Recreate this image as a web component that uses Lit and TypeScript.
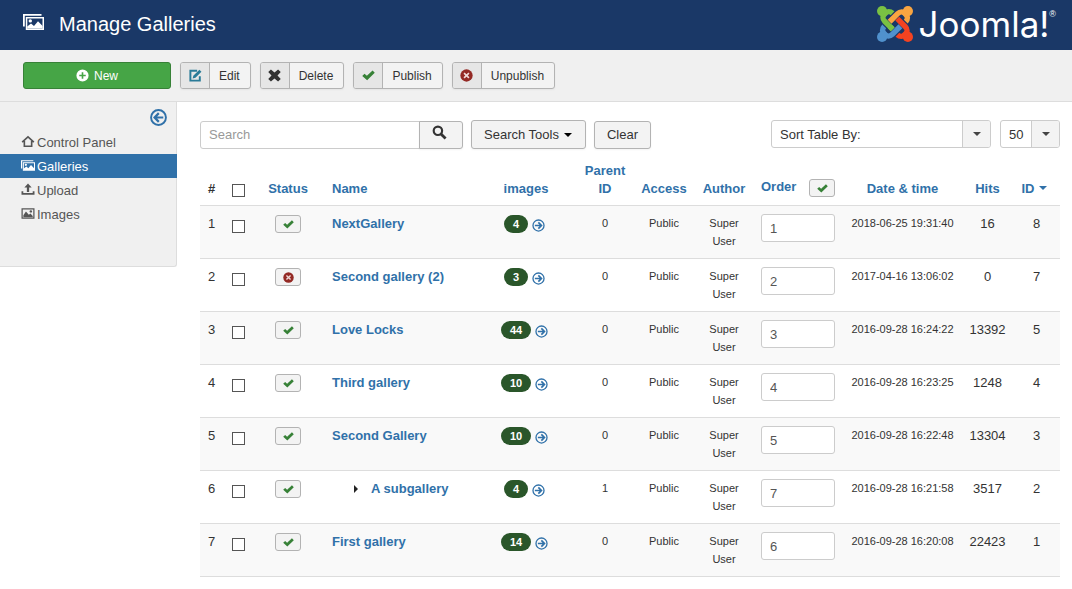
import { LitElement, html, css, svg, nothing } from "lit";
import { customElement, property } from "lit/decorators.js";

const icons: Record<string, unknown> = {
  gallery: svg`<path fill-rule="evenodd" d="M0 0H18.500V1.800H1.800V12.500H0ZM2.800 3H21V16H2.800ZM4.300 4.500V14.500H19.500V4.500Z"/><path d="M4.200 14.600V12.500L8 9.500L11 12L15 7.200L19.600 12V14.600Z"/><circle cx="7.300" cy="6.900" r="1.700"/>`,
  plus: svg`<path fill-rule="evenodd" d="M8 .5a7.500 7.500 0 1 0 0 15A7.500 7.500 0 0 0 8 .5ZM7 4h2v3h3v2H9v3H7V9H4V7h3Z"/>`,
  edit: svg`<path d="M10 2.200H1.700V14.300H13.300V9" fill="none" stroke="currentColor" stroke-width="2.400"/><path d="M4.500 11.800L5.300 8.300L12.800 .8L15.300 3.300L7.900 10.800Z"/>`,
  cross: svg`<path d="M.3 3.600L3.600 .5L8 4.300L12.400 .5L15.700 3.600L11.700 8L15.700 12.400L12.400 15.500L8 11.700L3.600 15.500L.3 12.400L4.300 8Z"/>`,
  check: svg`<path d="M0.300 8.500L3.100 5.800L6 8.300L13 1.900L15.700 4.600L6.300 13.800Z"/>`,
  remove: svg`<circle cx="8" cy="8" r="7.600"/><path d="M5 5L11 11M11 5L5 11" stroke="#f0d9d8" stroke-width="2"/>`,
  left: svg`<g fill="none" stroke="currentColor" stroke-width="1.800"><circle cx="8" cy="8" r="7"/><path d="M12.500 8H4.500M8.300 3.900L4.300 8L8.300 12.100" stroke-width="2.100"/></g>`,
  right: svg`<g fill="none" stroke="currentColor" stroke-width="1.600"><circle cx="8" cy="8" r="6.800"/><path d="M3.500 8H11M7.800 4.200L11.600 8L7.800 11.800" stroke-width="2.100"/></g>`,
  home: svg`<path d="M.8 8.800L8 2.200L15.200 8.800M3.500 7.500V13.800H12.500V7.500" fill="none" stroke="currentColor" stroke-width="2"/>`,
  upload: svg`<path d="M8 .5L12.500 5.500H9.400V11H6.600V5.500H3.500ZM0 10H2.200V12.200H13.800V10H16V14.500H0Z"/>`,
  image: svg`<path fill-rule="evenodd" d="M0 1.500H16V14.500H0ZM1.500 3V13H14.500V3Z"/><path d="M2.300 12.500V10L5.500 5.500L9 9.500L11 8L13.800 11V12.500Z"/><circle cx="11.500" cy="5.400" r="1.500"/>`,
  search: svg`<circle cx="6.300" cy="6.200" r="4.500" fill="none" stroke="currentColor" stroke-width="2.300"/><path d="M9.300 9.300L14.500 14.300" stroke="currentColor" stroke-width="3"/>`,
};

@customElement("ui-icon")
export class UiIcon extends LitElement {
  @property() name = "check";
  @property() box = "0 0 16 16";
  static styles = css`
    :host { display: inline-block; width: 13px; height: 13px; }
    .glyph { display: block; width: 100%; height: 100%; fill: currentColor; }
  `;
  render() {
    return html`<svg class="glyph" viewBox=${this.box} aria-hidden="true">${icons[this.name]}</svg>`;
  }
}

interface Gallery {
  name: string; images: number; parent: number; order: number;
  date: string; hits: number; id: number; off?: boolean; child?: boolean;
}

const galleries: Gallery[] = [
  { name: "NextGallery", images: 4, parent: 0, order: 1, date: "2018-06-25 19:31:40", hits: 16, id: 8 },
  { name: "Second gallery (2)", images: 3, parent: 0, order: 2, date: "2017-04-16 13:06:02", hits: 0, id: 7, off: true },
  { name: "Love Locks", images: 44, parent: 0, order: 3, date: "2016-09-28 16:24:22", hits: 13392, id: 5 },
  { name: "Third gallery", images: 10, parent: 0, order: 4, date: "2016-09-28 16:23:25", hits: 1248, id: 4 },
  { name: "Second Gallery", images: 10, parent: 0, order: 5, date: "2016-09-28 16:22:48", hits: 13304, id: 3 },
  { name: "A subgallery", images: 4, parent: 1, order: 7, date: "2016-09-28 16:21:58", hits: 3517, id: 2, child: true },
  { name: "First gallery", images: 14, parent: 0, order: 6, date: "2016-09-28 16:20:08", hits: 22423, id: 1 },
];

const actions = [
  { label: "Edit", icon: "edit", tone: "teal" },
  { label: "Delete", icon: "cross", tone: "dark" },
  { label: "Publish", icon: "check", tone: "green" },
  { label: "Unpublish", icon: "remove", tone: "red" },
];

const menu = [
  { label: "Control Panel", icon: "home" },
  { label: "Galleries", icon: "gallery", active: true },
  { label: "Upload", icon: "upload" },
  { label: "Images", icon: "image" },
];

const arm = "M4.800 13.600A3.750 3.750 0 0 0 10.200 18.900L15.600 13.500";
const arms = [
  { color: "#5091cd", turn: 0 },
  { color: "#7ac143", turn: 90 },
  { color: "#f9a541", turn: 180 },
  { color: "#f44321", turn: 270 },
];

@customElement("app-root")
export class AppRoot extends LitElement {
  static styles = css`
    :host {
      display: block; background: #fff; color: #333;
      font: 13px/18px "Liberation Sans", Arial, Helvetica, sans-serif;
    }
    * { box-sizing: border-box; }
    button, input, select { font: inherit; color: inherit; margin: 0; border-radius: 3px; }
    button { cursor: pointer; }
    a { color: #3071a9; text-decoration: none; }

    .header {
      display: flex; align-items: center; justify-content: space-between;
      height: 50px; padding: 0 16px 2px 23px; background: #1a3867; color: #fff;
    }
    .heading { display: flex; align-items: center; gap: 15px; }
    .heading ui-icon { width: 21px; height: 16px; margin-bottom: 4px; }
    .title { margin: 0; font-size: 20px; line-height: 24px; font-weight: 400; }
    .brand { display: flex; align-items: center; gap: 6px; color: #fff; }
    .mark { width: 36px; height: 36px; }
    .wordmark {
      display: flex; align-items: flex-start;
      font: 400 35px/38px Inter, "DejaVu Sans", sans-serif;
    }
    .reg { font: 9px/18px "Liberation Sans", Arial, sans-serif; }

    .toolbar {
      display: flex; gap: 9px; padding: 12px 23px;
      background: #f0f0f0; border-bottom: 1px solid #ddd;
    }
    .new {
      display: flex; align-items: center; justify-content: center; gap: 5px;
      width: 148px; height: 27px; padding: 0; font-size: 12px;
      color: #fff; background: #46a546; border: 1px solid #378137;
    }
    .action {
      display: flex; height: 27px; padding: 0; overflow: hidden; font-size: 12px;
      background: #f3f3f3; border: 1px solid #b3b3b3;
      box-shadow: 0 1px 2px rgba(0, 0, 0, 0.05);
    }
    .cap {
      display: flex; align-items: center; justify-content: center;
      width: 29px; height: 25px; background: #e6e6e6; border-right: 1px solid #b3b3b3;
    }
    .caption { padding: 1px 10px 0 9px; line-height: 25px; }
    .teal { color: #2a7b98; }
    .dark { color: #333; }
    .green { color: #378137; }
    .red { color: #942a25; }

    .body { display: flex; align-items: flex-start; }
    .side {
      flex: 0 0 177px; padding-bottom: 40px; background: #f0f0f0;
      border: solid #ddd; border-width: 0 1px 1px 0; border-radius: 0 0 3px 0;
    }
    .fold { display: flex; justify-content: flex-end; height: 28px; padding: 7px 9px 0 0; }
    .toggle { width: 17px; height: 17px; padding: 0; border: 0; background: none; color: #3071a9; }
    .toggle ui-icon { display: block; width: 17px; height: 17px; }
    .menu { display: flex; flex-direction: column; margin-right: -1px; }
    .item { display: flex; gap: 2px; height: 24px; padding: 0 21px; line-height: 25px; color: #555; }
    .item ui-icon { width: 14px; margin-top: 5px; }
    .active { background: #3071a9; color: #fff; }

    .main { flex: 1; min-width: 0; padding: 18px 12px 12px 23px; }
    .filters { display: flex; align-items: flex-end; gap: 8px; height: 29px; margin-bottom: 4px; }
    .group { display: flex; }
    .query { width: 220px; height: 28px; padding: 0 8px 2px; background: #fff; border: 1px solid #ccc; border-radius: 3px 0 0 3px; }
    .query::placeholder { color: #999; opacity: 1; }
    .btn {
      height: 28px; padding: 0 12px 1px; background: #f3f3f3; border: 1px solid #b3b3b3;
      box-shadow: 0 1px 2px rgba(0, 0, 0, 0.05);
    }
    .go { width: 44px; padding: 0 3px 0 0; margin-left: -1px; border-radius: 0 3px 3px 0; }
    .go ui-icon { width: 15px; height: 15px; }
    .tools { height: 29px; padding: 0 12px; }
    .down {
      display: inline-block; vertical-align: middle;
      border: 4px solid transparent; border-top-color: currentColor; border-bottom: 0;
    }
    .tools .down { margin: 0 1px 0 5px; color: #000; }
    .c-id .down { vertical-align: 3px; margin-left: 4px; }
    .sorts { display: flex; gap: 9px; margin: 0 0 1px auto; }
    .pick { display: grid; height: 28px; }
    .long { width: 220px; }
    .short { width: 60px; }
    .pick select {
      grid-area: 1 / 1; width: 100%; padding: 1px 32px 0 8px; appearance: none;
      background: #fff; border: 1px solid #ccc;
    }
    .arrow {
      grid-area: 1 / 1; justify-self: end; display: flex; align-items: center; justify-content: center;
      width: 28px; margin: 1px; background: #f3f3f3; border-left: 1px solid #ccc;
      border-radius: 0 2px 2px 0; pointer-events: none; color: #444;
    }

    .list { width: 100%; table-layout: fixed; border-spacing: 0; }
    .list th, .list td { padding: 9px 8px 7px; text-align: center; vertical-align: top; }
    .list th { vertical-align: bottom; font-weight: 700; }
    .list td { border-top: 1px solid #ddd; }
    .list tr:nth-child(odd) td { background: #f9f9f9; }
    .list tr:last-child td { border-bottom: 1px solid #ddd; }
    .list .start { text-align: left; }
    .list .tight { padding-left: 0; padding-right: 0; }
    .list .flush { padding-top: 8px; padding-bottom: 8px; }
    .list .small { font-size: 11px; }
    .list .c-id { padding-right: 5px; }
    .c-num { width: 24px; }
    .c-box { width: 28px; }
    .c-status { width: 72px; }
    .c-images { width: 102px; }
    .c-parent { width: 56px; }
    .c-access { width: 62px; }
    .c-author { width: 58px; }
    .c-order { width: 90px; }
    .c-date { width: 119px; }
    .c-hits { width: 51px; }
    .c-id { width: 47px; }
    .tick {
      display: block; appearance: none; width: 13px; height: 13px; margin: 0 auto;
      background: #fff; border: 1px solid #555; border-radius: 0;
    }
    .tick:checked { background: #3071a9; }
    td .tick { margin-top: 6px; }
    .micro {
      display: flex; align-items: center; justify-content: center;
      width: 26px; height: 18px; margin: 1px auto 0; padding: 0;
      background: #f3f3f3; border: 1px solid #b3b3b3;
    }
    .micro ui-icon { width: 11px; height: 11px; }
    .name { font-weight: 700; }
    .child { display: flex; align-items: center; gap: 13px; padding-left: 22px; }
    .twig { border: 4px solid transparent; border-left-color: #222; border-right: 0; }
    .count { display: flex; align-items: center; justify-content: center; gap: 4px; padding: 1px 3px 0 0; }
    .badge {
      padding: 0 9px; border-radius: 9px; background: #2a562a; color: #fff;
      font-size: 11px; font-weight: 700;
    }
    .count a { display: flex; padding-top: 2px; }
    .order-head { display: flex; justify-content: space-between; align-items: flex-start; height: 18px; line-height: 16px; }
    .order-head .micro { margin: 0; }
    .rank { display: block; width: 100%; height: 28px; padding: 0 8px; color: #555; background: #fff; border: 1px solid #ccc; }
  `;

  private row(g: Gallery, i: number) {
    return html`<tr>
      <td class="start">${i + 1}</td>
      <td class="tight flush"><input class="tick" type="checkbox" aria-label="Select ${g.name}" /></td>
      <td class="flush"><button class="micro ${g.off ? "red" : "green"}" aria-label=${g.off ? "Publish" : "Unpublish"}>
        <ui-icon name=${g.off ? "remove" : "check"}></ui-icon></button></td>
      <td class="start"><div class=${g.child ? "child" : "top"}>${g.child ? html`<span class="twig"></span>` : nothing}<a class="name" href="#">${g.name}</a></div></td>
      <td class="flush"><div class="count"><span class="badge">${g.images}</span><a href="#" aria-label="Open images"><ui-icon name="right"></ui-icon></a></div></td>
      <td class="small flush">${g.parent}</td>
      <td class="small flush">Public</td>
      <td class="small flush">Super User</td>
      <td class="flush"><input class="rank" type="text" aria-label="Order of ${g.name}" .value=${String(g.order)} /></td>
      <td class="small tight flush">${g.date}</td>
      <td class="tight">${g.hits}</td>
      <td>${g.id}</td>
    </tr>`;
  }

  render() {
    return html`
      <header class="header">
        <div class="heading">
          <ui-icon name="gallery" box="0 0 21 16"></ui-icon>
          <h1 class="title">Manage Galleries</h1>
        </div>
        <a class="brand" href="#">
          <svg class="mark" viewBox="0 0 24 24" aria-hidden="true">
            ${arms.map((a) => svg`<g transform="rotate(${a.turn} 12 12)">
              <path d=${arm} fill="none" stroke=${a.color} stroke-width="3.600"/>
              <path d="M3.200 20.800L6.500 17.500" stroke=${a.color} stroke-width="4.500"/>
              <circle cx="3.400" cy="20.600" r="3.400" fill=${a.color}/></g>`)}
            <path d="M8.500 13.600L10.400 15.500" stroke="#7ac143" stroke-width="3.600"/>
          </svg>
          <span class="wordmark">Joomla!<span class="reg">®</span></span>
        </a>
      </header>
      <div class="toolbar">
        <button class="new"><ui-icon name="plus"></ui-icon>New</button>
        ${actions.map((a) => html`<button class="action"><span class="cap ${a.tone}"><ui-icon name=${a.icon}></ui-icon></span><span class="caption">${a.label}</span></button>`)}
      </div>
      <div class="body">
        <aside class="side">
          <div class="fold"><button class="toggle" aria-label="Hide the sidebar"><ui-icon name="left"></ui-icon></button></div>
          <nav class="menu">
            ${menu.map((m) => html`<a class="item ${m.active ? "active" : ""}" href="#"><ui-icon name=${m.icon} box=${m.icon === "gallery" ? "0 0 21 16" : "0 0 16 16"}></ui-icon>${m.label}</a>`)}
          </nav>
        </aside>
        <main class="main">
          <div class="filters">
            <div class="group">
              <input class="query" type="text" placeholder="Search" aria-label="Search" />
              <button class="btn go" aria-label="Run search"><ui-icon name="search"></ui-icon></button>
            </div>
            <button class="btn tools">Search Tools<span class="down"></span></button>
            <button class="btn">Clear</button>
            <div class="sorts">
              <div class="pick long"><select aria-label="Sort table by"><option>Sort Table By:</option></select><span class="arrow"><span class="down"></span></span></div>
              <div class="pick short"><select aria-label="Rows per page"><option>50</option></select><span class="arrow"><span class="down"></span></span></div>
            </div>
          </div>
          <table class="list">
            <thead>
              <tr>
                <th class="c-num start">#</th>
                <th class="c-box tight flush"><input class="tick" type="checkbox" aria-label="Select all" /></th>
                <th class="c-status"><a href="#">Status</a></th>
                <th class="start"><a href="#">Name</a></th>
                <th class="c-images"><a href="#">images</a></th>
                <th class="c-parent tight"><a href="#">Parent<br />ID</a></th>
                <th class="c-access tight"><a href="#">Access</a></th>
                <th class="c-author tight"><a href="#">Author</a></th>
                <th class="c-order flush"><div class="order-head"><a href="#">Order</a><button class="micro green" aria-label="Save order"><ui-icon name="check"></ui-icon></button></div></th>
                <th class="c-date"><a href="#">Date &amp; time</a></th>
                <th class="c-hits tight"><a href="#">Hits</a></th>
                <th class="tight c-id"><a href="#">ID<span class="down"></span></a></th>
              </tr>
            </thead>
            <tbody>${galleries.map((g, i) => this.row(g, i))}</tbody>
          </table>
        </main>
      </div>
    `;
  }
}
